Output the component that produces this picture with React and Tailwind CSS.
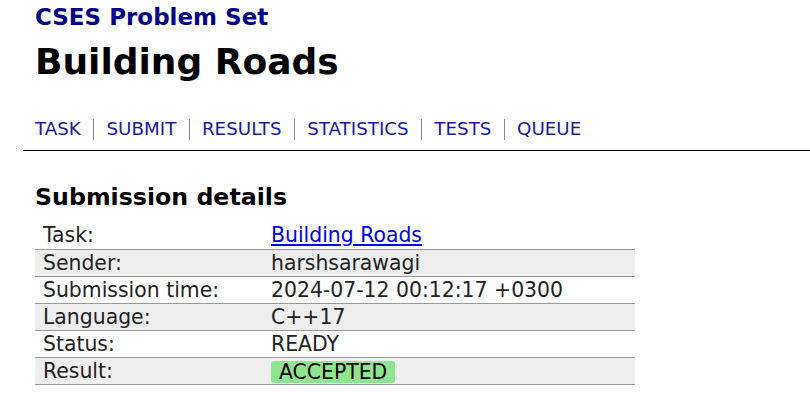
const tabs = ['TASK', 'SUBMIT', 'RESULTS', 'STATISTICS', 'TESTS', 'QUEUE'];

const rows = [
  ['Task:', 'link'],
  ['Sender:', 'harshsarawagi'],
  ['Submission time:', '2024-07-12 00:12:17 +0300'],
  ['Language:', 'C++17'],
  ['Status:', 'READY'],
  ['Result:', 'badge'],
];

export default function App() {
  return (
    <div className="bg-white min-h-screen text-black" style={{ fontFamily: '"DejaVu Sans", Verdana, sans-serif' }}>
      <div className="pl-[35px] pt-[3px]">
        <div className="text-[23px] font-bold text-[#000088] leading-[28px]">CSES Problem Set</div>
        <h1 className="text-[36px] font-bold leading-[44px] mt-[9px]">Building Roads</h1>
      </div>
      <div className="ml-[23px] mt-[34px] border-b border-black pb-[10px]">
        <div className="flex items-center pl-[12px] text-[18.3px] text-[#1a1a9e]">
          {tabs.map((t, i) => (
            <div key={t} className="flex items-center">
              {i > 0 && <span className="w-px h-[21px] bg-[#888] mx-[12.3px]" />}
              <span className="leading-[22px]">{t}</span>
            </div>
          ))}
        </div>
      </div>
      <div className="pl-[35px] pt-[31px]">
        <h2 className="text-[23.7px] font-bold leading-[30px]">Submission details</h2>
        <table className="w-[600px] mt-[10px] text-[20.4px] border-collapse">
          <tbody>
            {rows.map(([k, v], i) => (
              <tr key={k} className={`border-b border-[#999] ${i % 2 === 1 ? 'bg-[#eeeeee]' : ''}`}>
                <td className="w-[236px] pl-[8px] h-[27px] p-0 leading-[24px] text-[#222]">{k}</td>
                <td className="h-[27px] p-0 leading-[24px] text-[#222]">
                  {v === 'link' ? (
                    <a href="#" className="text-[#0000ee] underline">Building Roads</a>
                  ) : v === 'badge' ? (
                    <span className="inline-block align-middle bg-[#8fe58f] rounded-[3px] px-[8px] leading-[22px] text-black">ACCEPTED</span>
                  ) : (
                    v
                  )}
                </td>
              </tr>
            ))}
          </tbody>
        </table>
      </div>
    </div>
  );
}
